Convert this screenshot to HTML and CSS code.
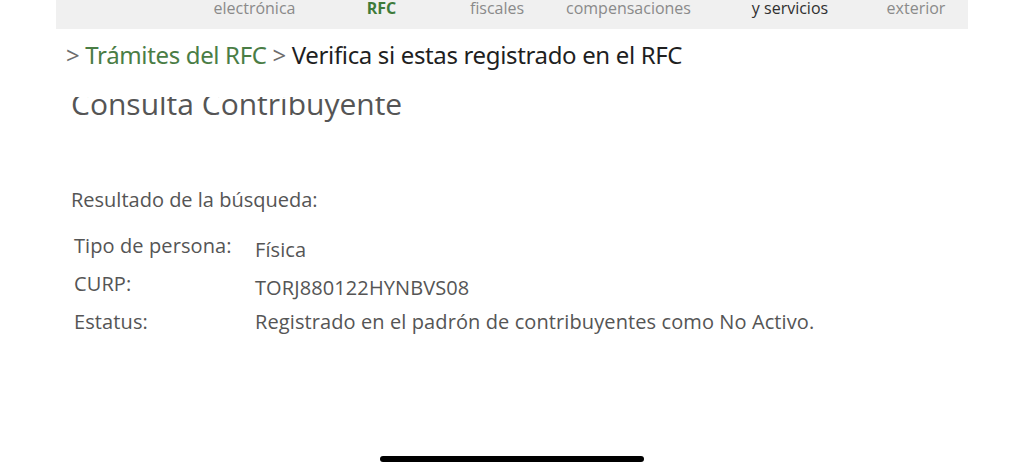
FILE: index.html
```html
<!DOCTYPE html>
<html lang="es">
<head>
<meta charset="utf-8">
<title>Consulta Contribuyente</title>
<link rel="stylesheet" href="styles.css">
</head>
<body>
<nav class="topnav">
  <span class="nav-item">electrónica</span>
  <span class="nav-item nav-active">RFC</span>
  <span class="nav-item">fiscales</span>
  <span class="nav-item">compensaciones</span>
  <span class="nav-item nav-dark">y servicios</span>
  <span class="nav-item">exterior</span>
</nav>
<div class="breadcrumb">
  <span class="sep">&gt;</span> <span class="crumb-link">Trámites del RFC</span> <span class="sep">&gt;</span> <span class="crumb-current">Verifica si estas registrado en el RFC</span>
</div>
<main class="content">
  <div class="title-clip"><h1 class="title">Consulta Contribuyente</h1></div>
  <p class="result-label">Resultado de la búsqueda:</p>
  <div class="result-table">
    <div class="row"><span class="key">Tipo de persona:</span><span class="val val-low">Física</span></div>
    <div class="row"><span class="key">CURP:</span><span class="val val-low">TORJ880122HYNBVS08</span></div>
    <div class="row"><span class="key">Estatus:</span><span class="val">Registrado en el padrón de contribuyentes como No Activo.</span></div>
  </div>
</main>
<div class="home-bar"></div>
</body>
</html>
```
FILE: styles.css
```css
html, body {
  margin: 0;
  padding: 0;
  background: #ffffff;
  height: 473px;
  overflow: hidden;
}
body {
  font-family: "Open Sans", "Liberation Sans", sans-serif;
  color: #555555;
  position: relative;
}
.topnav {
  margin: 0 56px;
  height: 29px;
  background: #f0f0f0;
  display: grid;
  grid-template-columns: 127px 127px 104px 159px 164px 88px;
  padding-left: 135px;
  box-sizing: border-box;
  font-size: 16px;
  line-height: 17px;
}
.nav-item {
  color: #8a8a8a;
  white-space: nowrap;
  display: flex;
  justify-content: center;
}
.nav-active {
  color: #3e7b3a;
  font-weight: 700;
}
.nav-dark {
  color: #2f2f2f;
}
.breadcrumb {
  padding-left: 66px;
  margin-top: 10px;
  font-size: 24px;
  line-height: 32px;
  color: #1f1f1f;
  font-family: "Noto Sans", "Open Sans", sans-serif;
  letter-spacing: -0.35px;
}
.sep { color: #6d6d6d; }
.crumb-link { color: #4a7d45; }
.crumb-current { color: #1f1f1f; }
.content {
  padding-left: 71px;
}
.title-clip {
  margin-top: 26px;
  height: 31px;
  overflow: hidden;
}
.title {
  margin: -13px 0 0 0;
  font-size: 30px;
  line-height: 40px;
  font-weight: 400;
  color: #555555;
}
.result-label {
  margin: 59px 0 0 0;
  font-size: 20px;
  line-height: 26px;
}
.result-table {
  margin-top: 20px;
  padding-left: 3px;
  display: flex;
  flex-direction: column;
  gap: 12px;
}
.row {
  display: grid;
  grid-template-columns: 181px auto;
  font-size: 20px;
  line-height: 26px;
  letter-spacing: 0.1px;
}
.val-low {
  position: relative;
  top: 4px;
}
.home-bar {
  position: absolute;
  left: 380px;
  top: 456px;
  width: 264px;
  height: 6px;
  border-radius: 3px;
  background: #000;
}
```
